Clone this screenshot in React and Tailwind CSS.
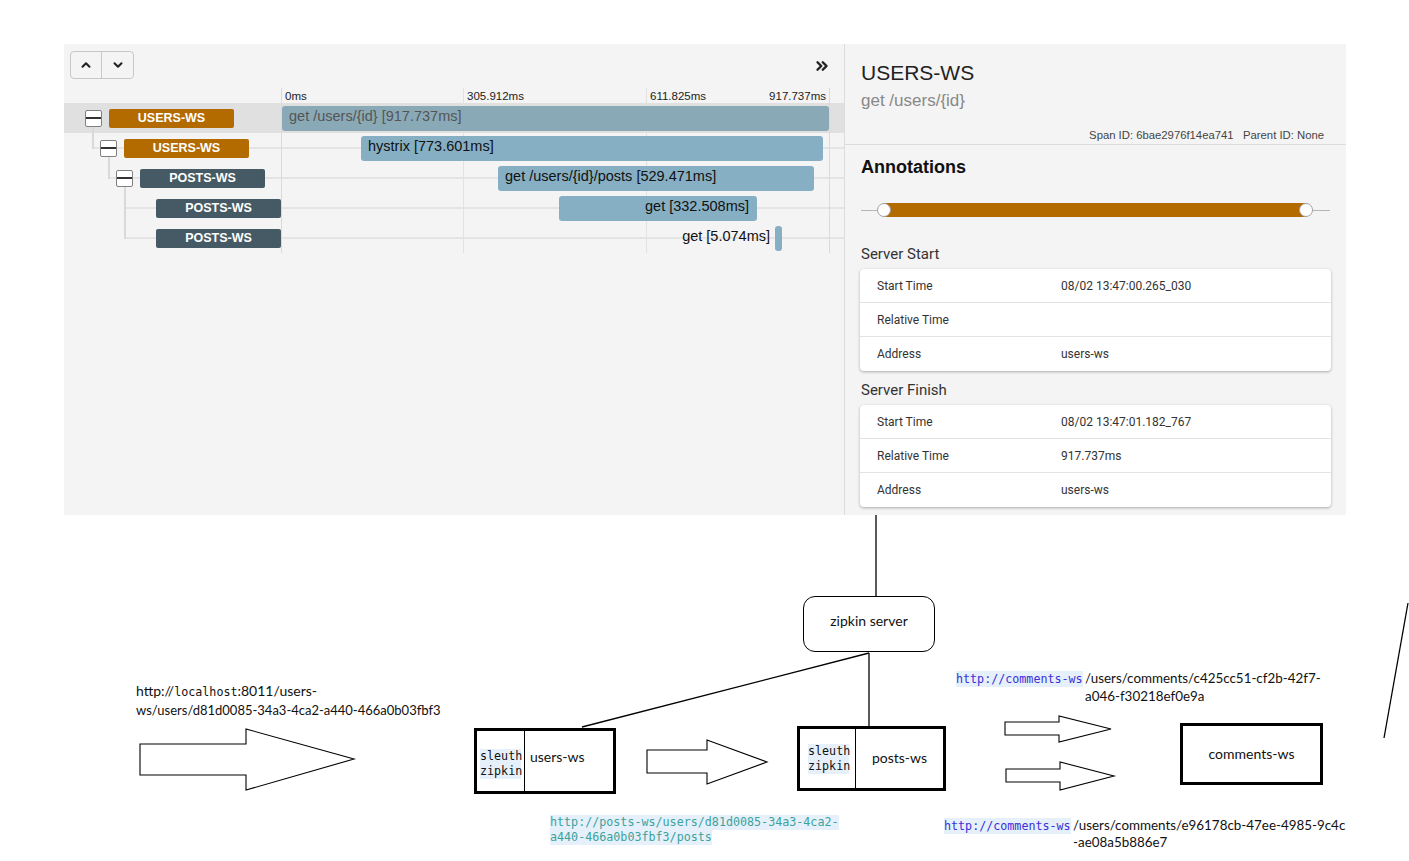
import { ChevronUp, ChevronDown, ChevronsRight } from "lucide-react";

const spans = [
  {
    service: "USERS-WS",
    color: "bg-[#b36b00]",
    indent: "pl-[21px]",
    toggle: true,
    selected: true,
    bar: { left: 1, width: 547 },
    label: "get /users/{id} [917.737ms]",
    align: "left",
  },
  {
    service: "USERS-WS",
    color: "bg-[#b36b00]",
    indent: "pl-[36px]",
    toggle: true,
    vert: "left-[28px] -top-[6px] h-[22px]",
    line: "left-[28px]",
    bar: { left: 80, width: 462 },
    label: "hystrix [773.601ms]",
    align: "left",
  },
  {
    service: "POSTS-WS",
    color: "bg-[#455a64]",
    indent: "pl-[52px]",
    toggle: true,
    vert: "left-[44px] -top-[6px] h-[22px]",
    line: "left-[44px]",
    bar: { left: 217, width: 316 },
    label: "get /users/{id}/posts [529.471ms]",
    align: "left",
  },
  {
    service: "POSTS-WS",
    color: "bg-[#455a64]",
    indent: "pl-[92px]",
    vert: "left-[60px] -top-[6px] h-[22px]",
    line: "left-[60px]",
    bar: { left: 278, width: 198 },
    label: "get [332.508ms]",
    align: "right",
  },
  {
    service: "POSTS-WS",
    color: "bg-[#455a64]",
    indent: "pl-[92px]",
    vert: "left-[60px] -top-[15px] h-[31px]",
    line: "left-[60px]",
    bar: { left: 494, width: 3 },
    label: "get [5.074ms]",
    align: "outside",
  },
];

const serverStart = [
  ["Start Time", "08/02 13:47:00.265_030"],
  ["Relative Time", ""],
  ["Address", "users-ws"],
];

const serverFinish = [
  ["Start Time", "08/02 13:47:01.182_767"],
  ["Relative Time", "917.737ms"],
  ["Address", "users-ws"],
];

function Toggle() {
  return (
    <div className="mr-[7px] flex h-[17px] w-[17px] shrink-0 items-center rounded-[2px] border border-[#808080] bg-white">
      <div className="h-[2px] w-full bg-[#333]" />
    </div>
  );
}

function SpanRow({ s }) {
  return (
    <div className={`relative flex h-[30px] ${s.selected ? "bg-[#e0e0e0]" : ""}`}>
      {s.line && <div className={`absolute ${s.line} right-0 top-[14px] h-[2px] bg-[#e4e4e4]`} />}
      {s.vert && <div className={`absolute ${s.vert} w-[2px] bg-[#d9d9d9]`} />}
      <div className={`relative z-[2] flex w-[217px] shrink-0 items-center ${s.indent}`}>
        {s.toggle && <Toggle />}
        <div
          className={`flex h-[19px] w-[125px] shrink-0 items-center justify-center rounded-[2px] text-[12.5px] font-bold text-white ${s.color}`}
        >
          {s.service}
        </div>
      </div>
      <div className="relative w-[548px]">
        <div
          className={`absolute top-[3px] z-[2] flex h-[25px] items-center whitespace-nowrap rounded-[3px] pb-[3px] text-[14.5px] ${
            s.selected ? "bg-[#8aa9b7] text-[#555]" : "bg-[#86afc3] text-[#111]"
          } ${s.align === "right" ? "justify-end pr-[8px]" : "pl-[7px]"}`}
          style={{ left: s.bar.left, width: s.bar.width }}
        >
          {s.align !== "outside" && s.label}
        </div>
        {s.align === "outside" && (
          <div className="absolute right-[59px] top-[3px] z-[2] flex h-[25px] items-center whitespace-nowrap pb-[3px] text-[14.5px] text-[#111]">
            {s.label}
          </div>
        )}
      </div>
    </div>
  );
}

function Card({ rows }) {
  return (
    <div className="mx-[15px] rounded-[4px] bg-white shadow-[0_1px_3px_rgba(0,0,0,0.3)]">
      {rows.map(([k, v], i) => (
        <div
          key={k}
          className={`flex h-[34px] items-center text-[12px] text-[#333] ${
            i < rows.length - 1 ? "border-b border-[#e3e3e3]" : ""
          }`}
        >
          <div className="w-[201px] pl-[17px]">{k}</div>
          <div>{v}</div>
        </div>
      ))}
    </div>
  );
}

function TracePanel() {
  return (
    <div className="ml-[64px] flex h-[471px] w-[1282px] bg-[#f4f4f4] font-['Liberation_Sans',Arial,sans-serif]">
      {/* timeline */}
      <div className="w-[781px] shrink-0 border-r border-[#dcdcdc]">
        <div className="flex h-[44px] justify-between">
          <div className="ml-[6px] mt-[7px] flex h-[28px] rounded-[4px] border border-[#c8c8c8]">
            <div className="flex w-[31px] items-center justify-center border-r border-[#c8c8c8]">
              <ChevronUp size={14} strokeWidth={3.5} color="#222" />
            </div>
            <div className="flex w-[31px] items-center justify-center">
              <ChevronDown size={14} strokeWidth={3.5} color="#222" />
            </div>
          </div>
          <div className="mr-[13px] mt-[13px]">
            <ChevronsRight size={18} strokeWidth={3.2} color="#222" />
          </div>
        </div>

        <div className="relative">
          {/* tick grid lines over the rows */}
          <div className="absolute bottom-0 left-[217px] top-0 z-[1] w-px bg-[#dadada]" />
          <div className="absolute bottom-0 left-[399px] top-0 z-[1] w-px bg-[#e2e2e2]" />
          <div className="absolute bottom-0 left-[582px] top-0 z-[1] w-px bg-[#e2e2e2]" />
          <div className="absolute bottom-0 left-[765px] top-0 z-[1] w-px bg-[#dadada]" />

          <div className="flex h-[15px] pt-[1px] text-[11.5px] leading-[15px] text-[#222]">
            <div className="w-[217px] shrink-0" />
            <div className="w-[182px] pl-[4px]">0ms</div>
            <div className="w-[183px] pl-[4px]">305.912ms</div>
            <div className="flex w-[183px] justify-between pl-[4px] pr-[3px]">
              <span>611.825ms</span>
              <span>917.737ms</span>
            </div>
          </div>

          {spans.map((s, i) => (
            <SpanRow key={i} s={s} />
          ))}
        </div>
      </div>

      {/* detail */}
      <div className="flex-1">
        <div className="h-[101px] border-b border-[#dcdcdc] pl-4 pt-[17px]">
          <div className="text-[21px] leading-[24px] text-[#222]">USERS-WS</div>
          <div className="mt-[6px] text-[17px] leading-[20px] text-[#888]">get /users/{"{id}"}</div>
          <div className="mt-[17px] pr-[22px] text-right text-[11.3px] leading-[14px] text-[#444]">
            Span ID: 6bae2976f14ea741&nbsp;&nbsp;&nbsp;Parent ID: None
          </div>
        </div>

        <div className="pl-4 pt-[11px] text-[18px] font-bold leading-[22px] text-[#111]">Annotations</div>

        <div className="mx-4 mt-[24px] flex h-[16px] items-center">
          <div className="h-px w-[16px] bg-[#b5b5b5]" />
          <div className="relative z-[1] h-[14px] w-[14px] shrink-0 rounded-full border border-[#a0a0a0] bg-white" />
          <div className="-mx-[7px] h-[14px] flex-1 bg-[#b36b00]" />
          <div className="relative z-[1] h-[14px] w-[14px] shrink-0 rounded-full border border-[#a0a0a0] bg-white" />
          <div className="h-px w-[17px] bg-[#b5b5b5]" />
        </div>

        <div className="font-['Roboto',sans-serif]">
          <div className="mt-[27px] pl-4 text-[15px] leading-[18px] text-[#333]">Server Start</div>
          <div className="mt-[6px]">
            <Card rows={serverStart} />
          </div>
          <div className="mt-[10px] pl-4 text-[15px] leading-[18px] text-[#333]">Server Finish</div>
          <div className="mt-[6px]">
            <Card rows={serverFinish} />
          </div>
        </div>
      </div>
    </div>
  );
}

const mono = "font-['DejaVu_Sans_Mono',monospace] text-[11.7px]";

function Diagram() {
  return (
    <div className="relative h-[346px] w-[1409px] font-['Lato',sans-serif] text-[14px] text-[#111]">
      <svg className="absolute left-0 top-0" width="1409" height="346" fill="none" stroke="#000" strokeWidth="1.3">
        <line x1="876" y1="0" x2="876" y2="82" />
        <line x1="869" y1="138" x2="582" y2="212" />
        <line x1="869" y1="138" x2="869" y2="212" />
        <line x1="1408" y1="88" x2="1384" y2="223" />
        <polygon fill="#fff" strokeWidth="1.1" points="140,229 246,229 246,214 354,244 246,275 246,260 140,260" />
        <polygon fill="#fff" strokeWidth="1.1" points="647,235 707,235 707,225 767,247 707,269 707,258 647,258" />
        <polygon fill="#fff" strokeWidth="1.1" points="1005,207 1059,207 1059,201 1111,214 1059,227 1059,220 1005,220" />
        <polygon fill="#fff" strokeWidth="1.1" points="1006,254 1060,254 1060,247 1114,261 1060,275 1060,267 1006,267" />
      </svg>

      <div className="absolute left-[136px] top-[167px] leading-[18px]">
        <div>
          http://<span className={mono}>localhost</span>:8011/users-
        </div>
        <div className="text-[13px]">ws/users/d81d0085-34a3-4ca2-a440-466a0b03fbf3</div>
      </div>

      <div className="absolute left-[803px] top-[81px] flex h-[56px] w-[132px] items-center justify-center rounded-[12px] border border-black bg-white pb-[7px]">
        zipkin server
      </div>

      <div className="absolute left-[474px] top-[213px] flex h-[66px] w-[142px] border-[3px] border-black bg-white">
        <div className={`w-[48px] border-r border-black pl-[3px] pt-[18px] leading-[15px] ${mono}`}>
          <div className="w-[41px] bg-[#e6f0fa]">sleuth</div>
          <div className="w-[41px] bg-[#e6f0fa]">zipkin</div>
        </div>
        <div className="pl-[5px] pt-[17px] leading-[18px]">users-ws</div>
      </div>

      <div className="absolute left-[797px] top-[211px] flex h-[65px] w-[149px] border-[3px] border-black bg-white">
        <div className={`w-[56px] border-r border-black pl-[8px] pt-[15px] leading-[15px] ${mono}`}>
          <div className="w-[41px] bg-[#e6f0fa]">sleuth</div>
          <div className="w-[41px] bg-[#e6f0fa]">zipkin</div>
        </div>
        <div className="flex flex-1 items-center justify-center pb-[2px]">posts-ws</div>
      </div>

      <div className="absolute left-[1180px] top-[208px] flex h-[62px] w-[143px] items-center justify-center border-[3px] border-black bg-white pb-[2px]">
        comments-ws
      </div>

      <div className={`absolute left-[550px] top-[300px] leading-[15px] text-[#3aa39c] ${mono}`}>
        <div className="w-fit bg-[#e6f0fa]">http://posts-ws/users/d81d0085-34a3-4ca2-</div>
        <div className="w-fit bg-[#e6f0fa]">a440-466a0b03fbf3/posts</div>
      </div>

      <div className={`absolute left-[956px] top-[156px] bg-[#e6f0fa] leading-[16px] text-[#3a2fd8] ${mono}`}>
        http://comments-ws
      </div>
      <div className="absolute left-[1085px] top-[154px] text-[13.4px] leading-[18px]">
        <div>/users/comments/c425cc51-cf2b-42f7-</div>
        <div>a046-f30218ef0e9a</div>
      </div>

      <div className={`absolute left-[944px] top-[303px] bg-[#e6f0fa] leading-[16px] text-[#3a2fd8] ${mono}`}>
        http://comments-ws
      </div>
      <div className="absolute left-[1073px] top-[302px] text-[13.4px] leading-[17px]">
        <div>/users/comments/e96178cb-47ee-4985-9c4c</div>
        <div>-ae08a5b886e7</div>
      </div>
    </div>
  );
}

export default function App() {
  return (
    <div className="min-h-[861px] w-[1409px] overflow-hidden bg-white pt-[44px]">
      <TracePanel />
      <Diagram />
    </div>
  );
}
